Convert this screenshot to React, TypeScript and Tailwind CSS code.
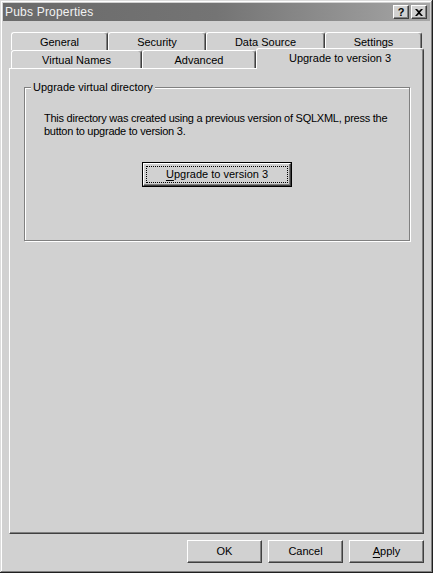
import React from "react";

const backTabs = [
  { label: "General", w: "w-[97px]" },
  { label: "Security", w: "w-[98px]" },
  { label: "Data Source", w: "w-[119px]" },
  { label: "Settings", w: "w-[97px]" },
];

const frontTabs = [
  { label: "Virtual Names", w: "w-[131px]" },
  { label: "Advanced", w: "w-[114px]" },
];

const raised =
  "border border-t-white border-l-white border-r-[#404040] border-b-[#404040] shadow-[inset_-1px_-1px_#808080]";

const Tab = ({ label, w }: { label: string; w: string }) => (
  <div
    className={`${w} h-[18px] flex items-center justify-center border-t border-l border-r border-t-white border-l-white border-r-[#404040] rounded-t-[3px] shadow-[inset_-1px_0_#808080] pt-[1px]`}>
    {label}
  </div>
);

const DlgButton = ({ children }: { children: React.ReactNode }) => (
  <button className={`w-[75px] h-[23px] bg-[#d1d1d1] ${raised} flex items-center justify-center text-black`}>
    {children}
  </button>
);

export default function App() {
  return (
    <div className="w-[433px] h-[573px] bg-[#d1d1d1] p-[3px] flex flex-col text-[11px] leading-[13px] text-black font-['Liberation_Sans',Arial,sans-serif] shadow-[inset_-1px_-1px_#202020,inset_1px_1px_#dcdcdc,inset_-2px_-2px_#808080,inset_2px_2px_#ffffff]">
      {/* title bar */}
      <div className="h-[18px] flex items-center bg-gradient-to-r from-[#6a6a6a] via-[#747474] to-[#a6a6a6] pl-[2px] pr-[3px]">
        <span className="text-[12px] text-[#f2f2f2] tracking-[0.2px] mt-[1px]">Pubs Properties</span>
        <div className="ml-auto flex gap-[2px]">
          <div className={`w-[16px] h-[14px] bg-[#d1d1d1] ${raised} flex items-center justify-center text-[11px] font-bold leading-none`}>
            ?
          </div>
          <div className={`w-[16px] h-[14px] bg-[#d1d1d1] ${raised} flex items-center justify-center`}>
            <svg width="8" height="7" viewBox="0 0 8 7">
              <path d="M0 0h2l2 2 2-2h2L5 3.5 8 7H6L4 5 2 7H0l3-3.5z" fill="#000" />
            </svg>
          </div>
        </div>
      </div>

      {/* tabs + panel */}
      <div className="pl-[6px] mt-[11px] flex flex-col">
        <div className="flex ml-[2px]">
          {backTabs.map((t) => (
            <Tab key={t.label} label={t.label} w={t.w} />
          ))}
        </div>
        <div className="flex ml-[2px] h-[18px] items-end">
          {frontTabs.map((t) => (
            <Tab key={t.label} label={t.label} w={t.w} />
          ))}
          <div className="relative z-10 w-[168px] h-[21px] -mb-[1px] bg-[#d1d1d1] flex justify-center pt-[3px] border-t border-l border-r border-t-white border-l-white border-r-[#404040] rounded-t-[3px] shadow-[inset_-1px_0_#808080]">
            Upgrade to version 3
          </div>
        </div>

        <div className="w-[415px] h-[466px] border border-t-white border-l-white border-r-[#404040] border-b-[#404040] shadow-[inset_-1px_-1px_#808080] pl-[14px] pt-[12px]">
          <fieldset className="w-[386px] h-[160px] border border-[#808080] shadow-[inset_1px_1px_#ffffff,1px_1px_#ffffff]">
            <legend className="ml-[6px] px-[2px] bg-[#d1d1d1]">Upgrade virtual directory</legend>
            <div className="pl-[19px] flex flex-col">
              <p className="mt-[18px] w-[362px] tracking-[-0.25px]">
                This directory was created using a previous version of SQLXML, press the button to upgrade to version 3.
              </p>
              <div className="mt-[24px] ml-[98px] w-[150px] h-[25px] border border-black">
                <div className="w-full h-full border border-t-white border-l-white border-r-[#404040] border-b-[#404040] shadow-[inset_-1px_-1px_#808080] p-[2px]">
                  <div className="w-full h-full border border-dotted border-black flex items-center justify-center">
                    <span>
                      <span className="underline underline-offset-[2px]">U</span>pgrade to version 3
                    </span>
                  </div>
                </div>
              </div>
            </div>
          </fieldset>
        </div>
      </div>

      {/* bottom buttons */}
      <div className="flex justify-end gap-[6px] mt-[6px] pr-[6px]">
        <DlgButton>OK</DlgButton>
        <DlgButton>Cancel</DlgButton>
        <DlgButton>
          <span>
            <span className="underline underline-offset-[2px]">A</span>pply
          </span>
        </DlgButton>
      </div>
    </div>
  );
}
